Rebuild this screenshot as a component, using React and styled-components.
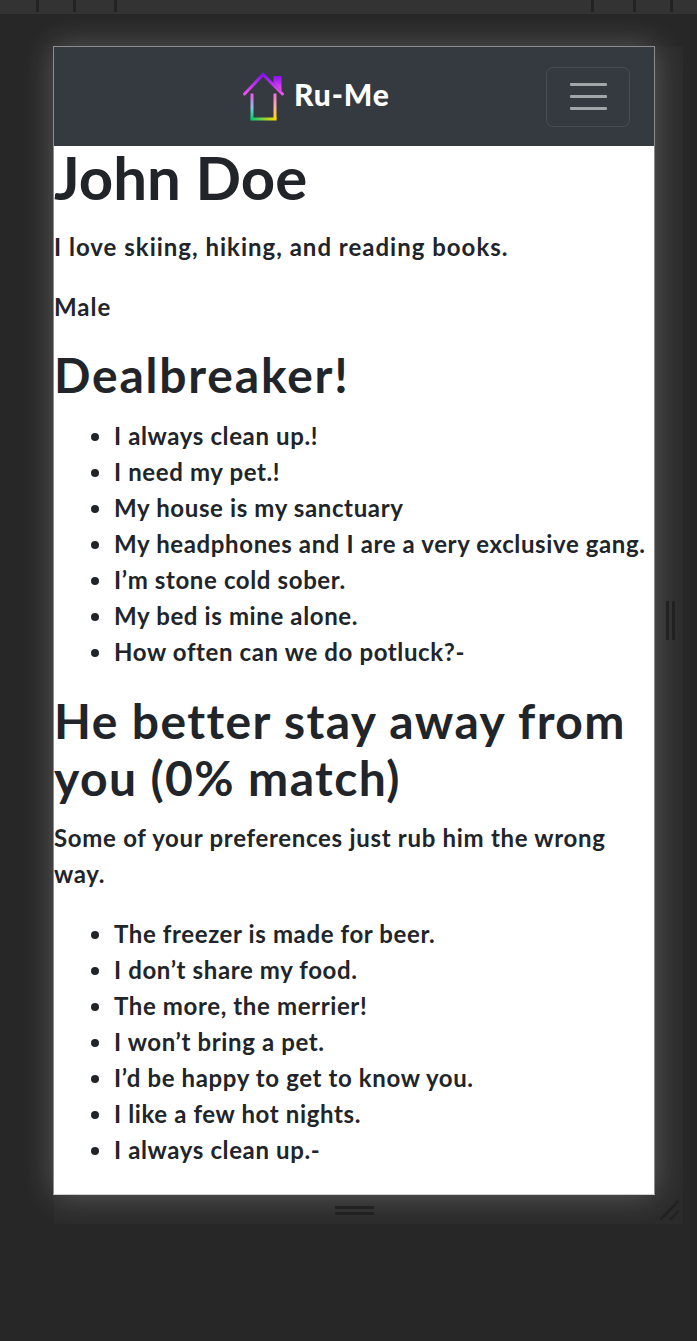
import React from 'react';
import styled, { createGlobalStyle } from 'styled-components';

const GlobalStyle = createGlobalStyle`
  html, body {
    margin: 0;
    padding: 0;
    background: #272727;
  }
  body {
    font-family: Lato, "Noto Sans", sans-serif;
    overflow: hidden;
  }
`;

const Page = styled.div`
  width: 697px;
  height: 1341px;
  background: #272727;
  overflow: hidden;
`;

const TopBar = styled.div`
  display: flex;
  height: 14px;
  background: #333333;
`;

const Tick = styled.span`
  width: 3px;
  height: 12px;
  margin-left: ${({ $gap }) => $gap}px;
  background: #232323;
`;

const Stage = styled.div`
  padding: 32px 14px 0 54px;
`;

const Resizer = styled.div`
  display: grid;
  grid-template-columns: 601px 28px;
  grid-template-rows: 1149px 29px;
  width: 629px;
  background: #2b2b2b;
  clip-path: inset(-50px 0 0 -50px);
`;

const Frame = styled.div`
  box-sizing: border-box;
  margin-left: -1px;
  width: 602px;
  height: 1149px;
  border: 1px solid #8d8d8d;
  border-bottom-color: #cfcfcf;
  background: #ffffff;
  color: #212529;
  font-size: 24px;
  font-weight: 700;
  line-height: 1.5;
  letter-spacing: 0.62px;
  box-shadow: 0 0 30px rgba(255, 255, 255, 0.24);
`;

const Navbar = styled.nav`
  display: flex;
  align-items: center;
  height: 99px;
  background: #343a40;
`;

const Brand = styled.a`
  display: flex;
  align-items: center;
  gap: 10px;
  margin-left: 189px;
  color: #ffffff;
  font-size: 30px;
  font-weight: 900;
  letter-spacing: 0.9px;
`;

const BrandName = styled.span`
  margin-top: -4px;
`;

const Toggler = styled.button`
  display: flex;
  flex-direction: column;
  gap: 9px;
  align-items: center;
  justify-content: center;
  width: 84px;
  height: 60px;
  margin-left: auto;
  margin-right: 24px;
  padding: 0;
  background: transparent;
  border: 1px solid rgba(255, 255, 255, 0.1);
  border-radius: 7px;
`;

const TogglerBar = styled.span`
  display: block;
  width: 37px;
  height: 3px;
  border-radius: 1px;
  background: rgba(255, 255, 255, 0.55);
`;

const Name = styled.h1`
  margin: -5px 0 17px;
  font-size: 60px;
  font-weight: 700;
  line-height: 72px;
  letter-spacing: 0;
`;

const Heading = styled.h2`
  margin: -4px 0 16px;
  font-size: 48px;
  font-weight: 700;
  line-height: 57.6px;
  letter-spacing: ${({ $spacing }) => $spacing}px;
`;

const Text = styled.p`
  margin: ${({ $shift }) => -$shift}px 0 ${({ $shift }) => 24 + $shift}px;
  letter-spacing: ${({ $spacing }) => $spacing}px;
`;

const List = styled.ul`
  margin: ${({ $shift }) => -$shift}px 0 ${({ $shift }) => 24 + $shift}px;
  padding-left: 60px;
`;

const SideGutter = styled.div`
  display: flex;
  gap: 3px;
  align-items: center;
  justify-content: center;
  margin-left: 2px;
  padding-top: 14px;
  height: 1120px;
`;

const GripBar = styled.span`
  width: 3px;
  height: 39px;
  background: #212121;
  border-radius: 1px;
`;

const BottomGutter = styled.div`
  display: flex;
  flex-direction: column;
  gap: 3px;
  align-items: center;
  padding-top: 11px;
`;

const BottomBar = styled.span`
  width: 39px;
  height: 3px;
  background: #212121;
  border-radius: 1px;
`;

const Corner = styled.div`
  display: flex;
  padding: 5px 0 0 5px;
`;

const Logo = () => (
  <svg width="41" height="50" viewBox="1 0 41 50" fill="none" aria-hidden="true">
    <defs>
      <linearGradient id="roof" x1="0" y1="0" x2="0" y2="1">
        <stop offset="0" stopColor="#8a10f0" />
        <stop offset="1" stopColor="#f050f0" />
      </linearGradient>
      <linearGradient id="wallLeft" gradientUnits="userSpaceOnUse" x1="0" y1="21" x2="0" y2="47">
        <stop offset="0" stopColor="#f050f0" />
        <stop offset="0.55" stopColor="#90c0e0" />
        <stop offset="1" stopColor="#00d070" />
      </linearGradient>
      <linearGradient id="floor" gradientUnits="userSpaceOnUse" x1="9" y1="0" x2="33" y2="0">
        <stop offset="0" stopColor="#00c878" />
        <stop offset="1" stopColor="#ffd800" />
      </linearGradient>
      <linearGradient id="wallRight" gradientUnits="userSpaceOnUse" x1="0" y1="21" x2="0" y2="47">
        <stop offset="0" stopColor="#f868e0" />
        <stop offset="0.55" stopColor="#ffb0a0" />
        <stop offset="1" stopColor="#ffd800" />
      </linearGradient>
    </defs>
    <path d="M2.5 22 L21 2.5 L40.5 22" stroke="url(#roof)" strokeWidth="3" strokeLinecap="round" strokeLinejoin="miter" />
    <path d="M31.5 4 H39.5 V19 L31.5 11 Z" fill="url(#roof)" />
    <path d="M10 21.5 V47" stroke="url(#wallLeft)" strokeWidth="3" />
    <path d="M8.5 47 H34.5" stroke="url(#floor)" strokeWidth="3" />
    <path d="M33 21.5 V47" stroke="url(#wallRight)" strokeWidth="3" />
  </svg>
);

const dealbreakers = [
  'I always clean up.!',
  'I need my pet.!',
  'My house is my sanctuary',
  'My headphones and I are a very exclusive gang.',
  'I’m stone cold sober.',
  'My bed is mine alone.',
  'How often can we do potluck?-',
];

const mismatches = [
  'The freezer is made for beer.',
  'I don’t share my food.',
  'The more, the merrier!',
  'I won’t bring a pet.',
  'I’d be happy to get to know you.',
  'I like a few hot nights.',
  'I always clean up.-',
];

const ticks = [36, 34, 38, 474, 39, 34];

export default function App() {
  return (
    <Page>
      <GlobalStyle />
      <TopBar>
        {ticks.map((gap, i) => (
          <Tick key={i} $gap={gap} />
        ))}
      </TopBar>
      <Stage>
        <Resizer>
          <Frame>
            <Navbar>
              <Brand>
                <Logo />
                <BrandName>Ru-Me</BrandName>
              </Brand>
              <Toggler aria-label="Toggle navigation">
                <TogglerBar />
                <TogglerBar />
                <TogglerBar />
              </Toggler>
            </Navbar>
            <Name>John Doe</Name>
            <Text $shift={1} $spacing={1}>I love skiing, hiking, and reading books.</Text>
            <Text $shift={1} $spacing={1}>Male</Text>
            <Heading $spacing={1.8}>Dealbreaker!</Heading>
            <List $shift={2}>
              {dealbreakers.map((item) => (
                <li key={item}>{item}</li>
              ))}
            </List>
            <Heading $spacing={1.4}>He better stay away from you (0% match)</Heading>
            <Text $shift={3} $spacing={0.7}>Some of your preferences just rub him the wrong way.</Text>
            <List $shift={3}>
              {mismatches.map((item) => (
                <li key={item}>{item}</li>
              ))}
            </List>
          </Frame>
          <SideGutter>
            <GripBar />
            <GripBar />
          </SideGutter>
          <BottomGutter>
            <BottomBar />
            <BottomBar />
          </BottomGutter>
          <Corner>
            <svg width="20" height="20" viewBox="0 0 20 20" fill="none" aria-hidden="true">
              <path d="M1 19 L18 1.5 M11 19 L18 11.5" stroke="#212121" strokeWidth="2.4" strokeLinecap="round" />
            </svg>
          </Corner>
        </Resizer>
      </Stage>
    </Page>
  );
}
